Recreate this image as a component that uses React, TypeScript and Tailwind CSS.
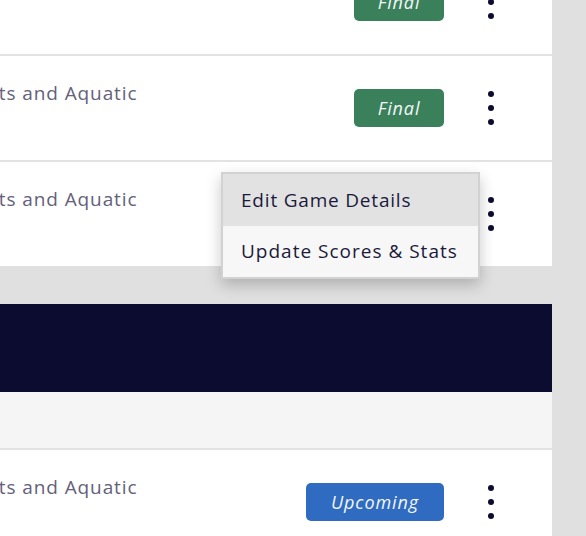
import React from "react";

type Game = {
  id: number;
  venue: string;
  status: "Final" | "Upcoming";
};

const topGames: Game[] = [
  { id: 1, venue: "Sports and Aquatic", status: "Final" },
  { id: 2, venue: "Sports and Aquatic", status: "Final" },
  { id: 3, venue: "Sports and Aquatic", status: "Final" },
];

const nextGames: Game[] = [
  { id: 4, venue: "Sports and Aquatic", status: "Upcoming" },
];

const font = { fontFamily: "'Open Sans', Lato, sans-serif" };

function Dots() {
  return (
    <div className="flex w-[94px] shrink-0 flex-col items-center gap-[8px]">
      <span className="h-[6px] w-[6px] rounded-full bg-[#0b0c30]" />
      <span className="h-[6px] w-[6px] rounded-full bg-[#0b0c30]" />
      <span className="h-[6px] w-[6px] rounded-full bg-[#0b0c30]" />
    </div>
  );
}

function Badge({ status }: { status: Game["status"] }) {
  return (
    <span
      className={`flex h-[38px] items-center justify-center rounded-[5px] text-[18px] italic tracking-[0.9px] text-[#f4f6f8] ${
        status === "Final" ? "w-[90px] bg-[#3a815b]" : "w-[138px] bg-[#2e6bc1]"
      }`}
    >
      {status}
    </span>
  );
}

function Row({ game, menu }: { game: Game; menu?: boolean }) {
  return (
    <div className="relative flex h-[104px] items-center bg-white pr-[14px]">
      <div className="flex h-full min-w-0 flex-1 overflow-hidden pt-[24px]">
        <span className="-ml-[46px] whitespace-nowrap text-[19px] leading-[26px] tracking-[0.9px] text-[#64617a]">
          {game.venue}
        </span>
      </div>
      <Badge status={game.status} />
      <Dots />

      {menu && (
        <div className="absolute left-[221px] top-[10px] z-10 w-[259px] border-2 border-[#d2d2d2] shadow-[0_6px_14px_rgba(0,0,0,0.22)]">
          <div className="flex h-[52px] items-center bg-[#e2e2e2] px-[18px] text-[19px] tracking-[0.8px] text-[#1b1a3a]">
            Edit Game Details
          </div>
          <div className="flex h-[51px] items-center bg-[#f7f7f7] px-[18px] text-[19px] tracking-[1px] text-[#1b1a3a]">
            Update Scores &amp; Stats
          </div>
        </div>
      )}
    </div>
  );
}

export default function App() {
  return (
    <div className="flex h-[536px] overflow-hidden bg-[#e0e0e0]" style={font}>
      <div className="-mt-[50px] w-[552px] shrink-0">
        {/* PAST GAMES */}
        <div className="flex flex-col gap-[2px] bg-[#e2e2e2]">
          {topGames.map((g, i) => (
            <Row key={g.id} game={g} menu={i === 2} />
          ))}
        </div>

        <div className="h-[38px]" />

        {/* NEXT SECTION */}
        <div className="h-[88px] bg-[#0b0c30]" />
        <div className="h-[58px] border-b-2 border-[#e2e2e2] bg-[#f5f5f5]" />
        {nextGames.map((g) => (
          <Row key={g.id} game={g} />
        ))}
      </div>
    </div>
  );
}
